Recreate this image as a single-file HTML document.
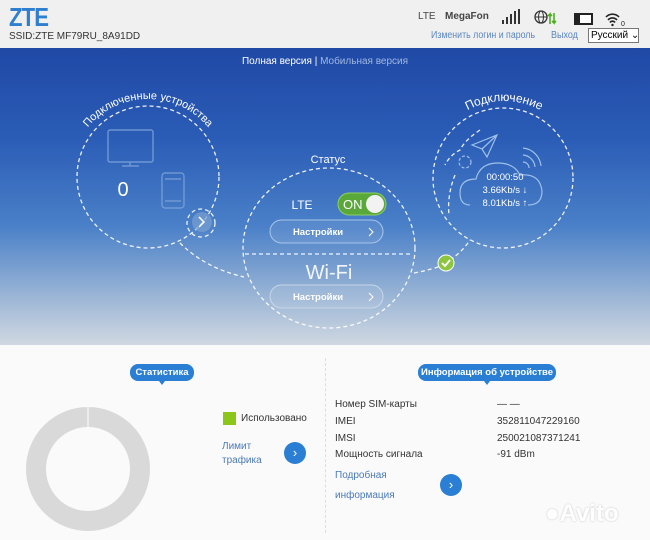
<!DOCTYPE html>
<html><head><meta charset="utf-8"><style>
*{margin:0;padding:0;box-sizing:border-box}
body{width:650px;height:540px;overflow:hidden;background:#fafafa;font-family:"Liberation Sans",sans-serif;position:relative}
.a{position:absolute;white-space:nowrap}
#hdr{position:absolute;left:0;top:0;width:650px;height:48px;background:#f0f0f0}
#blue{position:absolute;left:0;top:48px;width:650px;height:297px;background:linear-gradient(#2049a6 0%,#2a5cb6 30%,#4a80c8 60%,#9fb8d6 85%,#d0d8e2 100%)}
.pill{position:absolute;background:#2a7fd4;color:#fff;font-weight:bold;font-size:9.5px;height:17px;line-height:17px;border-radius:8px;text-align:center;white-space:nowrap}
.pill:after{content:"";position:absolute;left:50%;bottom:-4px;margin-left:-3px;border:3px solid transparent;border-top:4px solid #2a7fd4;border-bottom:0}
.t{font-size:10px;color:#333}
.lk{font-size:10px;color:#4a7ab8}
.btn{position:absolute;width:22px;height:22px;border-radius:50%;background:#2a7fd4;color:#fff;font-size:13px;text-align:center;line-height:21px}
</style></head><body>
<div id="hdr"></div>
<div class="a" style="left:9px;top:2px;font-size:26px;color:#2f7fd0;font-weight:bold;letter-spacing:-1px;transform:scaleX(0.85);transform-origin:left">ZTE</div>
<div class="a" style="left:9px;top:31px;font-size:10px;color:#333">SSID:ZTE MF79RU_8A91DD</div>
<div class="a" style="left:418px;top:11px;font-size:10px;color:#444">LTE</div>
<div class="a" style="left:445px;top:11px;font-size:10px;color:#444;font-weight:bold">MegaFon</div>
<svg class="a" style="left:498px;top:8px" width="150" height="20">
<rect x="4" y="12" width="2" height="4" fill="#333"/><rect x="8" y="9" width="2" height="7" fill="#333"/><rect x="12" y="6" width="2" height="10" fill="#333"/><rect x="16" y="3" width="2" height="13" fill="#333"/><rect x="20" y="1" width="2" height="15" fill="#333"/>
<circle cx="43" cy="9" r="6" fill="none" stroke="#333" stroke-width="1.3"/><ellipse cx="43" cy="9" rx="2.5" ry="6" fill="none" stroke="#333"/><line x1="37" y1="9" x2="49" y2="9" stroke="#333"/>
<path d="M52 16V6l-2 2M52 6l2 2M56 5v10l-2-2M56 15l2-2" stroke="#4caf20" stroke-width="1.6" fill="none"/>
<path d="M76 5h19v12H76v-6z" fill="#222"/><rect x="82" y="7" width="11" height="8" fill="#fff"/>
<path d="M108 9a9 9 0 0 1 13 0M110 12a6 6 0 0 1 9 0M112 14.5a3 3 0 0 1 5 0" stroke="#222" stroke-width="1.6" fill="none"/><circle cx="114.5" cy="17" r="1.2" fill="#222"/>
<text x="123" y="18" font-size="7" font-family="Liberation Sans" fill="#222">0</text>
</svg>
<div class="a" style="left:431px;top:30px;font-size:10px;color:#5a86c0;transform:scaleX(0.88);transform-origin:left">Изменить логин и пароль</div>
<div class="a" style="left:551px;top:30px;font-size:10px;color:#5a86c0;transform:scaleX(0.9);transform-origin:left">Выход</div>
<div class="a" style="left:588px;top:28px;width:51px;height:15px;border:1px solid #777;background:#fff;font-size:10px;line-height:13px;padding-left:2px;color:#000">Русский ⌄</div>
<div id="blue"></div>
<div class="a" style="left:0;width:650px;text-align:center;top:56px;font-size:10px;color:#fff">Полная версия | <span style="color:#9fb8e0">Мобильная версия</span></div>
<svg class="a" style="left:0;top:0" width="650" height="345">
<defs>
<path id="arcL" d="M70 177 A78 78 0 0 1 226 177"/>
<path id="arcR" d="M427 178 A77 77 0 0 1 581 178"/>
</defs>
<g fill="none" stroke="#fff" stroke-width="1.3" stroke-dasharray="4 3" opacity="0.9">
<circle cx="148" cy="177" r="71"/>
<circle cx="503" cy="178" r="70"/>
<ellipse cx="329" cy="248" rx="86" ry="80"/>
<line x1="245" y1="254" x2="413" y2="254"/>
<path d="M180 243 Q205 268 244 277"/>
<path d="M414 273 Q430 270 444 265 M450 260 Q462 252 470 240"/>
<circle cx="201" cy="223" r="14"/>
<path d="M480 130 q-15 10 -20 20 q-10 5 -15 15 M455 175 q-8 20 -6 40"/>
</g>
<text font-size="11" fill="#fff" font-family="Liberation Sans" text-anchor="middle"><textPath href="#arcL" startOffset="50%">Подключенные устройства</textPath></text>
<text font-size="12" fill="#fff" font-family="Liberation Sans" text-anchor="middle"><textPath href="#arcR" startOffset="50%">Подключение</textPath></text>
<g fill="none" stroke="#7aa0d8" stroke-width="1.2">
<rect x="108" y="130" width="45" height="32" rx="2"/><path d="M122 166h17M130 162v4"/>
<rect x="162" y="173" width="22" height="35" rx="3"/><path d="M165 179h16M165 201h16"/>
</g>
<circle cx="202" cy="222" r="10" fill="#7aa0d0" opacity="0.7"/>
<path d="M199 217l5 5-5 5" stroke="#fff" stroke-width="1.5" fill="none"/>
<text x="123" y="196" font-size="20" fill="#fff" text-anchor="middle" font-family="Liberation Sans">0</text>
<g fill="none" stroke="#9fc0e8" stroke-width="1.2">
<path d="M470 205 q-10 0 -10 -12 q0 -14 16 -14 q4 -16 22 -16 q16 0 22 12 q20 -2 22 16 q0 14 -14 14"/>
<path d="M472 145 l25 -10 -10 22 -5 -8z M482 149 l15 -14"/>
<path d="M523 148 a20 20 0 0 1 18 18 M523 155 a13 13 0 0 1 12 12 M523 162 a6 6 0 0 1 6 6"/>
<circle cx="465" cy="162" r="6" stroke-dasharray="3 2"/>
</g>
<g font-family="Liberation Sans" font-size="9.5" fill="#fff" text-anchor="middle">
<text x="505" y="180">00:00:50</text>
<text x="505" y="193">3.66Kb/s ↓</text>
<text x="505" y="206">8.01Kb/s ↑</text>
</g>
<circle cx="446" cy="263" r="8" fill="#8cc63f" stroke="#fff" stroke-width="1"/>
<path d="M442 263l3 3 5-6" stroke="#fff" stroke-width="1.8" fill="none"/>
<text x="328" y="163" font-size="11" fill="#fff" text-anchor="middle" font-family="Liberation Sans">Статус</text>
<text x="302" y="209" font-size="12" fill="#fff" text-anchor="middle" font-family="Liberation Sans">LTE</text>
<rect x="338" y="193" width="48" height="22" rx="11" fill="#5aa83a" stroke="#8ed060"/>
<text x="343" y="209" font-size="13" fill="#fff" font-family="Liberation Sans">ON</text>
<circle cx="375" cy="204" r="9" fill="#f2f2f2"/>
<rect x="270" y="220" width="113" height="23" rx="11.5" fill="rgba(255,255,255,0.08)" stroke="#a8c4ea"/>
<text x="318" y="235" font-size="9.5" font-weight="bold" fill="#fff" text-anchor="middle" font-family="Liberation Sans">Настройки</text>
<path d="M369 228l4 4-4 4" stroke="#fff" fill="none"/>
<text x="329" y="279" font-size="20" fill="#fff" text-anchor="middle" font-family="Liberation Sans" opacity="0.9">Wi-Fi</text>
<rect x="270" y="285" width="113" height="23" rx="11.5" fill="rgba(255,255,255,0.08)" stroke="#c8d6ea"/>
<text x="318" y="300" font-size="9.5" font-weight="bold" fill="#fff" text-anchor="middle" font-family="Liberation Sans">Настройки</text>
<path d="M369 293l4 4-4 4" stroke="#fff" fill="none"/>
</svg>
<div class="pill" style="left:130px;top:364px;width:64px">Статистика</div>
<div class="pill" style="left:418px;top:364px;width:138px">Информация об устройстве</div>
<div class="a" style="left:325px;top:358px;height:175px;border-left:1px dashed #ddd"></div>
<svg class="a" style="left:20px;top:405px" width="140" height="130"><circle cx="68" cy="64" r="52" fill="none" stroke="#d9d9d9" stroke-width="20"/><line x1="68" y1="2" x2="68" y2="22" stroke="#fff" stroke-width="1"/></svg>
<div class="a" style="left:223px;top:412px;width:13px;height:13px;background:#8cc61a"></div>
<div class="a t" style="left:241px;top:413px">Использовано</div>
<div class="a lk" style="left:222px;top:440px;line-height:14px;white-space:normal;width:50px">Лимит трафика</div>
<div class="btn" style="left:284px;top:442px">›</div>
<div class="a t" style="left:335px;top:399px">Номер SIM-карты</div>
<div class="a t" style="left:335px;top:416px">IMEI</div>
<div class="a t" style="left:335px;top:433px">IMSI</div>
<div class="a t" style="left:335px;top:449px">Мощность сигнала</div>
<div class="a t" style="left:497px;top:399px">— —</div>
<div class="a t" style="left:497px;top:416px">352811047229160</div>
<div class="a t" style="left:497px;top:433px">250021087371241</div>
<div class="a t" style="left:497px;top:449px">-91 dBm</div>
<div class="a lk" style="left:335px;top:470px">Подробная</div>
<div class="a lk" style="left:335px;top:490px">информация</div>
<div class="btn" style="left:440px;top:474px">›</div>
<div class="a" style="left:545px;top:500px;font-size:24px;font-weight:bold;color:#fff;opacity:0.85;text-shadow:0 0 2px #bbb">●Avito</div>
</body></html>
